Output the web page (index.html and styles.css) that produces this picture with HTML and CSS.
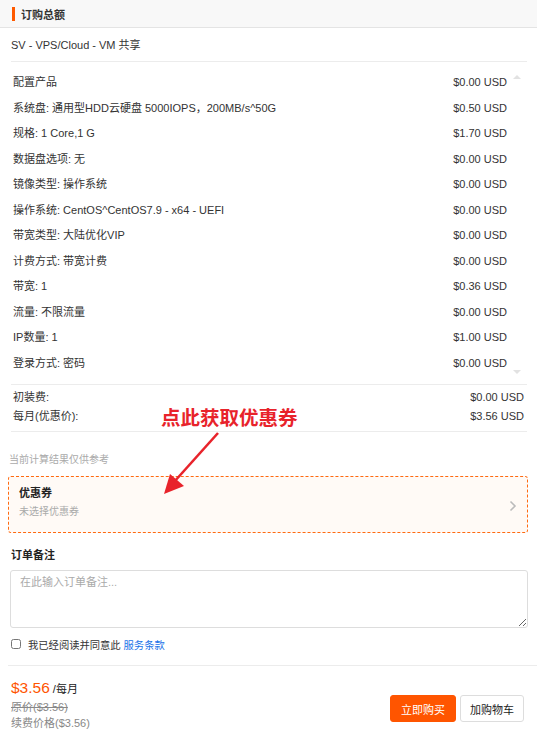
FILE: index.html
```html
<!DOCTYPE html>
<html lang="zh-CN">
<head>
    <meta charset="UTF-8">
    <meta name="viewport" content="width=device-width, initial-scale=1.0">
    <title>订购总额</title>
    <link rel="stylesheet" href="styles.css">
</head>
<body>
    <div class="panel">
        <div class="panel-head">
            <span class="bar"></span>
            <h3>订购总额</h3>
        </div>

        <div class="summary">
            <div class="product">SV - VPS/Cloud - VM 共享</div>

            <div class="items">
                <div class="item-list">
                    <div class="row"><span>配置产品</span><span>$0.00 USD</span></div>
                    <div class="row"><span>系统盘: 通用型HDD云硬盘 5000IOPS，200MB/s^50G</span><span>$0.50 USD</span></div>
                    <div class="row"><span>规格: 1 Core,1 G</span><span>$1.70 USD</span></div>
                    <div class="row"><span>数据盘选项: 无</span><span>$0.00 USD</span></div>
                    <div class="row"><span>镜像类型: 操作系统</span><span>$0.00 USD</span></div>
                    <div class="row"><span>操作系统: CentOS^CentOS7.9 - x64 - UEFI</span><span>$0.00 USD</span></div>
                    <div class="row"><span>带宽类型: 大陆优化VIP</span><span>$0.00 USD</span></div>
                    <div class="row"><span>计费方式: 带宽计费</span><span>$0.00 USD</span></div>
                    <div class="row"><span>带宽: 1</span><span>$0.36 USD</span></div>
                    <div class="row"><span>流量: 不限流量</span><span>$0.00 USD</span></div>
                    <div class="row"><span>IP数量: 1</span><span>$1.00 USD</span></div>
                    <div class="row"><span>登录方式: 密码</span><span>$0.00 USD</span></div>
                </div>
                <div class="scroll">
                    <span class="arrow up"></span>
                    <span class="arrow down"></span>
                </div>
            </div>

            <div class="totals">
                <div class="row"><span>初装费:</span><span>$0.00 USD</span></div>
                <div class="row"><span>每月(优惠价):</span><span>$3.56 USD</span></div>
            </div>
        </div>

        <p class="note">当前计算结果仅供参考</p>

        <div class="coupon">
            <div class="coupon-text">
                <div class="coupon-title">优惠券</div>
                <div class="coupon-sub">未选择优惠券</div>
            </div>
            <svg class="chevron" width="8" height="12" viewBox="0 0 8 12"><path d="M1.5 1.5 L6 6 L1.5 10.5" fill="none" stroke="#bbb" stroke-width="1.6"/></svg>
        </div>

        <h4 class="remark-title">订单备注</h4>
        <textarea class="remark" placeholder="在此输入订单备注..."></textarea>

        <label class="agree">
            <input type="checkbox">
            <span>我已经阅读并同意此 <a href="#">服务条款</a></span>
        </label>

        <div class="footer">
            <div class="price">
                <div class="now"><span class="amount">$3.56</span> <span class="unit">/每月</span></div>
                <div class="old">原价($3.56)</div>
                <div class="renew">续费价格($3.56)</div>
            </div>
            <div class="actions">
                <button class="btn buy">立即购买</button>
                <button class="btn cart">加购物车</button>
            </div>
        </div>

        <!-- annotation over the page -->
        <div class="hint">点此获取优惠券</div>
        <svg class="hint-arrow" width="80" height="80" viewBox="0 0 80 80">
            <line x1="58" y1="5" x2="14" y2="54" stroke="#e8232b" stroke-width="2.6"/>
            <polygon points="4,66 10,46 24,58" fill="#e8232b"/>
        </svg>
    </div>
</body>
</html>
```

FILE: styles.css
```css
body {
    margin: 0;
    font-family: "Liberation Sans", Arial, "Noto Sans CJK SC", sans-serif;
    font-size: 11px;
    color: #333;
    background: #fff;
}

.panel {
    position: relative;
    width: 537px;
}

.panel-head {
    display: flex;
    align-items: center;
    height: 27px;
    background: #f8f8f8;
    border-bottom: 1px solid #e4e4e4;
}

.panel-head .bar {
    width: 3px;
    height: 14px;
    margin-left: 12px;
    margin-right: 6px;
    background: #ff5a00;
}

.panel-head h3 {
    margin: 0;
    font-size: 11px;
    font-weight: bold;
}

.summary {
    margin: 0 10px 0 11px;
}

.product {
    height: 33px;
    line-height: 34px;
    border-bottom: 1px solid #ececec;
}

.items {
    display: flex;
    border-bottom: 1px solid #ececec;
}

.item-list {
    flex: 1;
    padding: 8px 0 8px 2px;
}

.row {
    display: flex;
    justify-content: space-between;
    height: 25.5px;
    line-height: 25.5px;
}

.scroll {
    width: 20px;
    display: flex;
    flex-direction: column;
    justify-content: space-between;
    align-items: center;
    padding: 13px 0 10px;
}

.arrow {
    width: 0;
    height: 0;
    border-left: 4px solid transparent;
    border-right: 4px solid transparent;
}

.arrow.up {
    border-bottom: 4px solid #e2e2e2;
}

.arrow.down {
    border-top: 4px solid #e2e2e2;
}

.totals {
    padding: 3px 3px 5px 2px;
    border-bottom: 1px solid #ececec;
}

.totals .row {
    height: 19px;
    line-height: 19px;
}

.note {
    margin: 21px 0 0 9px;
    font-size: 10px;
    color: #aaa;
    line-height: 14px;
}

.coupon {
    display: flex;
    justify-content: space-between;
    align-items: center;
    margin: 9px 9px 0 8px;
    height: 55px;
    padding: 0 10px;
    border: 1px dashed #ff6a10;
    border-radius: 3px;
    background: #fffaf6;
}

.coupon-text {
    margin-bottom: 5px;
}

.coupon-title {
    font-weight: bold;
    color: #222;
    line-height: 16px;
}

.coupon-sub {
    margin-top: 3px;
    font-size: 10px;
    color: #aaa;
    line-height: 16px;
}

.chevron {
    margin-top: 2px;
}

.remark-title {
    margin: 14px 0 0 11px;
    font-size: 11px;
    font-weight: bold;
    color: #222;
    line-height: 16px;
}

.remark {
    display: block;
    box-sizing: border-box;
    width: 518px;
    height: 58px;
    margin: 7px 0 0 10px;
    padding: 4px 9px;
    border: 1px solid #ddd;
    border-radius: 3px;
    font-family: inherit;
    font-size: 11px;
    line-height: 14px;
    color: #333;
}

.remark::placeholder {
    color: #aaa;
}

.agree {
    display: flex;
    align-items: center;
    margin: 8px 0 0 10px;
    height: 16px;
    font-size: 10.3px;
}

.agree input {
    width: 10px;
    height: 10px;
    margin: 0 7px 0 1px;
}

.agree a {
    color: #1a73e8;
    text-decoration: none;
}

.footer {
    display: flex;
    justify-content: space-between;
    align-items: flex-start;
    margin: 13px 0 0 8px;
    padding: 12px 13px 10px 3px;
    border-top: 1px solid #ececec;
}

.now {
    height: 21px;
    line-height: 20px;
}

.amount {
    font-size: 15.5px;
    color: #ff5500;
}

.unit {
    color: #222;
}

.old {
    color: #888;
    text-decoration: line-through;
    line-height: 16px;
}

.renew {
    color: #888;
    line-height: 16px;
}

.actions {
    display: flex;
    gap: 4px;
    margin-top: 17px;
}

.btn {
    height: 27px;
    padding: 0;
    font-family: inherit;
    font-size: 11px;
    white-space: nowrap;
    border-radius: 3px;
    cursor: pointer;
}

.buy {
    width: 66px;
    background: #ff5500;
    border: 1px solid #ff5500;
    color: #fff;
}

.cart {
    width: 64px;
    background: #fff;
    border: 1px solid #ddd;
    color: #222;
}

.hint {
    position: absolute;
    left: 161px;
    top: 406px;
    font-size: 19.5px;
    font-weight: bold;
    color: #e8232b;
    line-height: 24px;
}

.hint-arrow {
    position: absolute;
    left: 160px;
    top: 428px;
}
```
